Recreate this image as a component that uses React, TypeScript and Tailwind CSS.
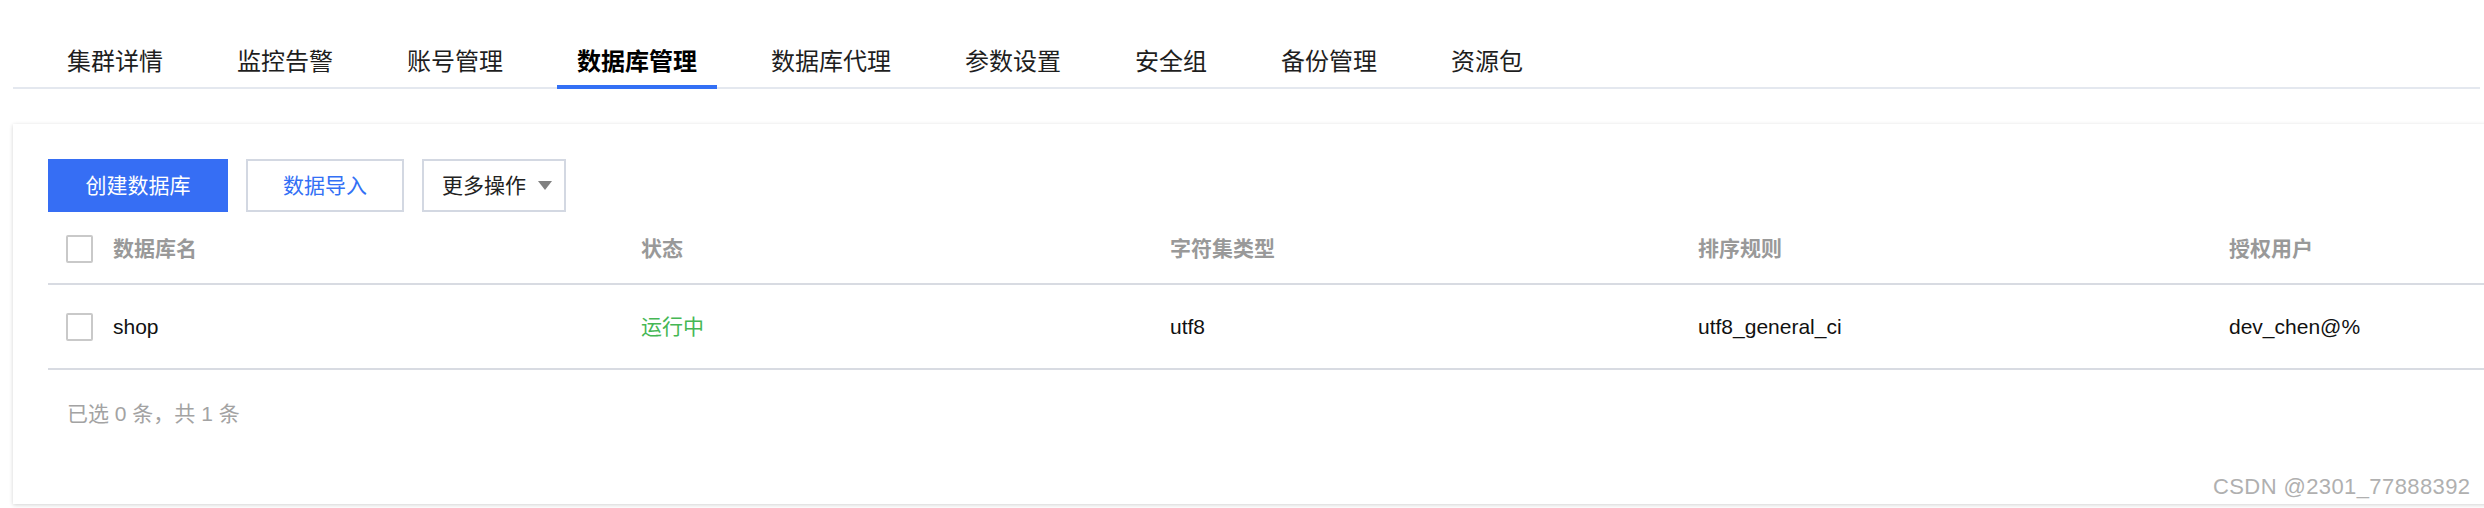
import React from "react";

const tabs = ["集群详情", "监控告警", "账号管理", "数据库管理", "数据库代理", "参数设置", "安全组", "备份管理", "资源包"];

function Checkbox() {
  return <span className="block w-[27px] h-[28px] border-2 border-[#c9c9c9] rounded-[2px] bg-white" />;
}

export default function App() {
  return (
    <div className="relative w-[2484px] h-[508px] overflow-hidden bg-white font-['Liberation_Sans','Noto_Sans_CJK_SC',sans-serif]">
      {/* Tabs */}
      <div className="ml-[13px] mr-[4px] pt-[36px] border-b-2 border-[#e4e8ef] flex pl-[34px] gap-[34px]">
        {tabs.map((t, i) => (
          <div
            key={t}
            className={
              "px-[20px] pt-[12px] pb-[9px] -mb-[2px] border-b-4 text-[24px] leading-[28px] " +
              (i === 3 ? "border-[#3370f5] font-bold text-black" : "border-transparent text-[#1e1e1e]")
            }
          >
            {t}
          </div>
        ))}
      </div>

      {/* Card */}
      <div className="mt-[35px] ml-[13px] w-[2490px] h-[380px] bg-white shadow-[0_1px_4px_rgba(0,0,0,0.18)] pl-[35px] pt-[35px]">
        <div className="flex gap-[18px]">
          <button className="w-[180px] h-[53px] bg-[#366ef4] text-white text-[21px]">创建数据库</button>
          <button className="w-[158px] h-[53px] border-2 border-[#d3d8e2] bg-white text-[#3370f5] text-[21px]">数据导入</button>
          <button className="w-[144px] h-[53px] border-2 border-[#d3d8e2] bg-white text-[#222] text-[21px] flex items-center pl-[18px] gap-[12px]">
            <span>更多操作</span>
            <svg width="14" height="9" viewBox="0 0 14 9"><path d="M0 0h14L7 9z" fill="#808080" /></svg>
          </button>
        </div>

        <div className="mt-[3px] grid grid-cols-[65px_528px_529px_528px_531px_1fr] h-[70px] items-center border-b-2 border-[#d8dbe2] text-[21px] text-[#999] font-semibold">
          <div className="pl-[18px]"><Checkbox /></div>
          <div>数据库名</div>
          <div>状态</div>
          <div>字符集类型</div>
          <div>排序规则</div>
          <div>授权用户</div>
        </div>
        <div className="grid grid-cols-[65px_528px_529px_528px_531px_1fr] h-[85px] items-center border-b-2 border-[#d8dbe2] text-[21px] text-[#111]">
          <div className="pl-[18px]"><Checkbox /></div>
          <div>shop</div>
          <div className="text-[#45b754]">运行中</div>
          <div>utf8</div>
          <div>utf8_general_ci</div>
          <div>dev_chen@%</div>
        </div>
        <div className="pl-[19px] pt-[30px] text-[21px] leading-[28px] text-[#a3a3a3]">已选 0 条，共 1 条</div>
      </div>

      <div className="absolute left-[2213px] top-[474px] text-[22px] leading-[26px] text-[#b0b0b0] tracking-[0.4px]">CSDN @2301_77888392</div>
    </div>
  );
}
